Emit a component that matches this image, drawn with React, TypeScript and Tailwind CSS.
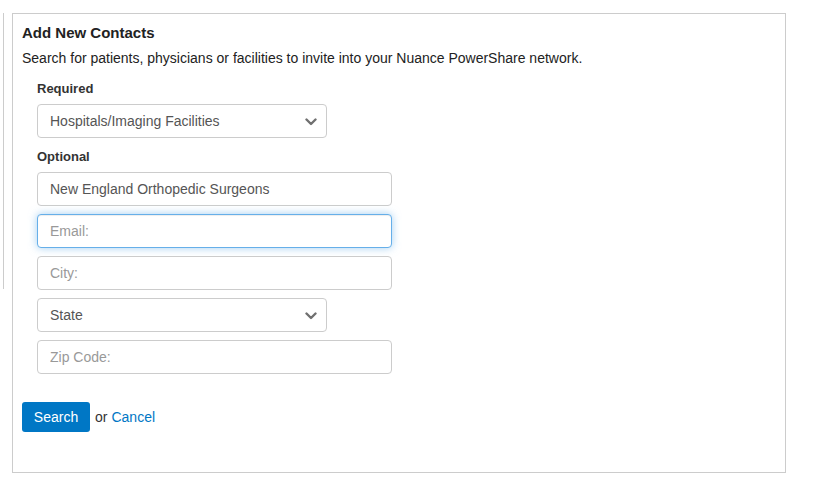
import React from "react";

function Chevron() {
  return (
    <svg width="12" height="8" viewBox="0 0 12 8" className="absolute right-[9px] top-[13px]">
      <path d="M1.5 1.5 L6 6 L10.5 1.5" fill="none" stroke="#707070" strokeWidth="2.4" strokeLinecap="round" strokeLinejoin="round" />
    </svg>
  );
}

function SelectBox({ label }: { label: string }) {
  return (
    <div className="relative w-[290px] h-[34px] border border-[#cccccc] rounded-[4px] bg-white flex items-center pl-[12px] text-[14px] text-[#555555]">
      {label}
      <Chevron />
    </div>
  );
}

function TextBox({ value, placeholder, focus }: { value?: string; placeholder?: string; focus?: boolean }) {
  return (
    <input
      readOnly
      value={value ?? ""}
      placeholder={placeholder}
      className={
        "block w-[355px] h-[34px] rounded-[4px] bg-white px-[12px] text-[14px] text-[#555555] placeholder:text-[#999999] outline-none border " +
        (focus
          ? "border-[#66afe9] shadow-[inset_0_1px_1px_rgba(0,0,0,0.075),0_0_8px_rgba(102,175,233,0.6)]"
          : "border-[#cccccc]")
      }
    />
  );
}

export default function App() {
  return (
    <div
      className="w-[818px] h-[488px] bg-white flex items-start pt-[13px]"
      style={{ fontFamily: '"Liberation Sans", Arial, sans-serif' }}
    >
      <div className="w-[4px] h-[276px] border-r border-[#cccccc] shrink-0" />
      <div className="ml-[8px] w-[774px] h-[460px] border border-[#cccccc] pl-[9px] pt-[9px] shrink-0">
        <div className="text-[15px] leading-[20px] font-bold text-[#222222]">Add New Contacts</div>
        <div className="mt-[5px] text-[14px] leading-[20px] text-[#222222]">
          Search for patients, physicians or facilities to invite into your Nuance PowerShare network.
        </div>
        <div className="pl-[15px]">
          <div className="mt-[12px] text-[13px] leading-[18px] font-bold text-[#333333]">Required</div>
          <div className="mt-[6px]">
            <SelectBox label="Hospitals/Imaging Facilities" />
          </div>
          <div className="mt-[10px] text-[13px] leading-[18px] font-bold text-[#333333]">Optional</div>
          <div className="mt-[6px] flex flex-col gap-[8px]">
            <TextBox value="New England Orthopedic Surgeons" />
            <TextBox placeholder="Email:" focus />
            <TextBox placeholder="City:" />
            <SelectBox label="State" />
            <TextBox placeholder="Zip Code:" />
          </div>
        </div>
        <div className="mt-[28px] flex items-center text-[14px]">
          <button className="w-[68px] h-[30px] rounded-[3px] bg-[#0077c5] text-white text-[14px]">Search</button>
          <span className="ml-[5px] text-[#333333]">or</span>
          <a className="ml-[4px] text-[#0077c5] cursor-pointer">Cancel</a>
        </div>
      </div>
    </div>
  );
}
